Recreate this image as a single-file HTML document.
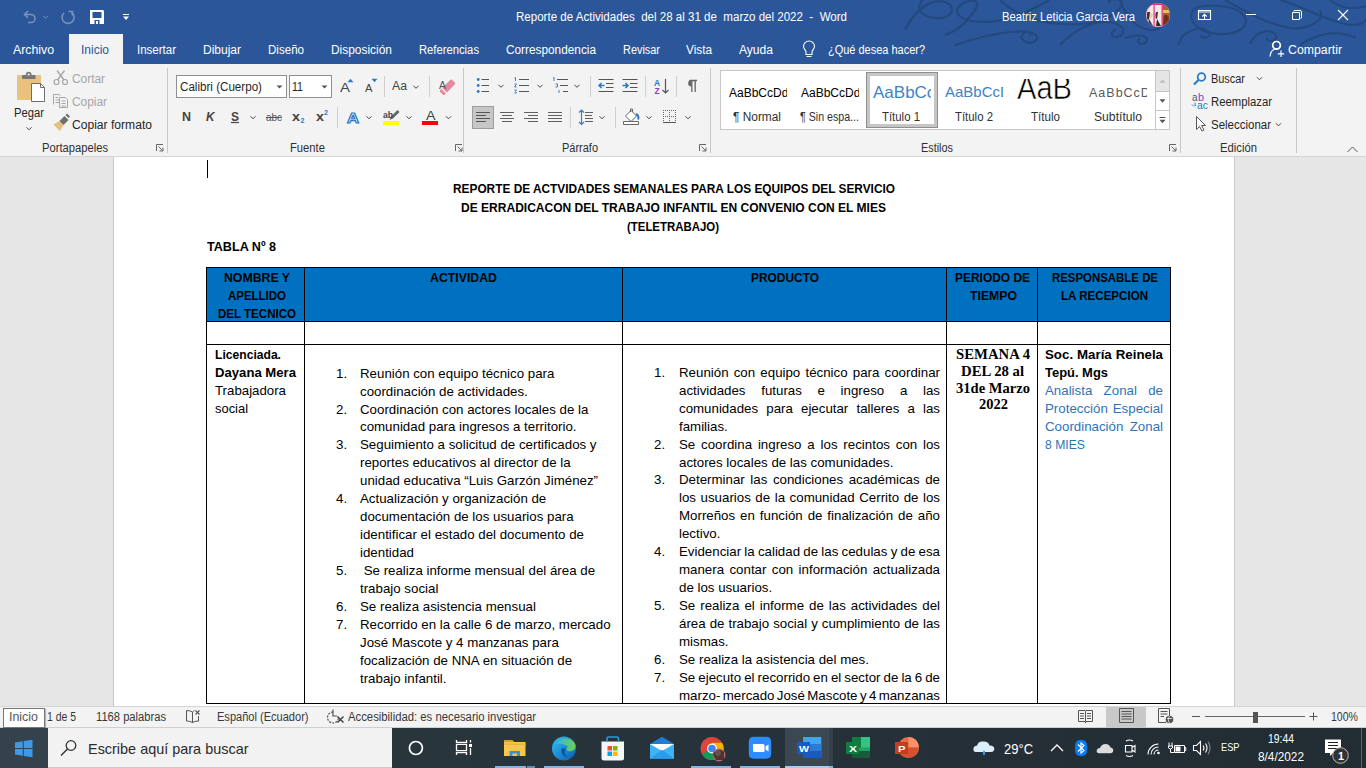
<!DOCTYPE html><html><head><meta charset="utf-8"><style>
*{margin:0;padding:0;box-sizing:border-box}
html,body{width:1366px;height:768px;overflow:hidden;background:#e6e6e6;position:relative;font-family:"Liberation Sans",sans-serif}
.a{position:absolute}
.t{position:absolute;white-space:pre;transform-origin:0 0}

</style></head><body>
<div class="a" style="left:0px;top:0px;width:1366px;height:64px;background:#2b579a;"></div>
<div class="a" style="left:0px;top:64px;width:1366px;height:93px;background:#f3f3f3;"></div>
<div class="a" style="left:0px;top:156px;width:1366px;height:1px;background:#d5d5d5;"></div>
<div class="a" style="left:0px;top:157px;width:1366px;height:549px;background:#e6e6e6;"></div>
<div class="a" style="left:114px;top:157px;width:1120px;height:549px;background:#ffffff;"></div>
<div class="a" style="left:113px;top:157px;width:1px;height:549px;background:#c8c8c8;"></div>
<div class="a" style="left:1234px;top:157px;width:1px;height:549px;background:#c8c8c8;"></div>
<div class="a" style="left:0px;top:727px;width:1366px;height:1px;background:#cfcfcf;"></div>
<div class="a" style="left:0px;top:707px;width:1366px;height:20px;background:#f3f3f3;"></div>
<div class="a" style="left:0px;top:706px;width:1366px;height:1px;background:#d5d5d5;"></div>
<div class="a" style="left:0px;top:728px;width:1366px;height:40px;background:linear-gradient(90deg,#2c3a40 0%,#28343b 40%,#242f37 70%,#212c33 100%);"></div>
<svg class="a" style="left:0;top:0" width="1366" height="64"><path d="M905 30 C915 10 930 -2 945 2 C958 6 952 20 935 18 C918 16 915 5 925 -2" stroke="#24497f" fill="none" stroke-width="2.2"/><path d="M945 35 C960 30 968 20 975 10 C982 0 972 -2 962 4 C950 12 960 22 985 22 C1010 22 1030 10 1050 0" stroke="#24497f" fill="none" stroke-width="2.2"/><path d="M955 45 C970 40 990 34 1010 32 C1030 30 1040 34 1036 40 C1032 45 1020 42 1022 36 C1024 30 1032 30 1030 36" stroke="#24497f" fill="none" stroke-width="2.2"/><path d="M1000 0 C1010 10 1030 22 1060 24 C1090 26 1110 20 1120 8 C1126 0 1116 -4 1108 2" stroke="#24497f" fill="none" stroke-width="2.2"/><path d="M1060 45 C1075 30 1090 22 1105 22 C1122 22 1128 32 1120 36 C1112 40 1108 32 1116 30" stroke="#24497f" fill="none" stroke-width="2.2"/><path d="M1120 0 C1125 15 1135 28 1150 30 C1160 31 1166 24 1160 20" stroke="#24497f" fill="none" stroke-width="2.2"/><path d="M1125 38 C1140 33 1150 36 1146 42 C1142 46 1134 42 1140 38" stroke="#24497f" fill="none" stroke-width="2.2"/><path d="M1178 45 C1182 32 1196 26 1206 30 C1214 34 1208 40 1200 36" stroke="#24497f" fill="none" stroke-width="2.2"/><path d="M1192 20 C1188 8 1200 4 1220 6 C1245 8 1252 22 1240 30 C1225 38 1198 34 1192 20Z" stroke="#24497f" fill="none" stroke-width="2.2"/><path d="M1225 0 C1240 8 1265 24 1290 28 C1310 30 1325 20 1320 10" stroke="#24497f" fill="none" stroke-width="2.2"/><path d="M1250 44 C1255 32 1268 28 1275 34 C1280 40 1270 44 1266 38" stroke="#24497f" fill="none" stroke-width="2.2"/><path d="M1280 0 C1300 5 1320 18 1345 24 C1360 27 1366 22 1366 18" stroke="#24497f" fill="none" stroke-width="2.2"/><path d="M1300 45 C1318 32 1340 30 1356 38" stroke="#24497f" fill="none" stroke-width="2.2"/><path d="M1330 0 C1340 8 1350 10 1366 6" stroke="#24497f" fill="none" stroke-width="2.2"/></svg>
<div class="a" style="left:69px;top:34px;width:54px;height:30px;background:#f3f3f3;"></div>
<div class="a" style="left:207px;top:160px;width:1px;height:18px;background:#000;"></div>
<div class="a" style="left:206px;top:267px;width:965px;height:55px;background:#0070c0;"></div>
<div class="a" style="left:206px;top:267px;width:965px;height:1px;background:#000;"></div>
<div class="a" style="left:206px;top:321px;width:965px;height:1px;background:#000;"></div>
<div class="a" style="left:206px;top:344px;width:965px;height:1px;background:#000;"></div>
<div class="a" style="left:206px;top:703px;width:965px;height:1px;background:#000;"></div>
<div class="a" style="left:206px;top:267px;width:1px;height:437px;background:#000;"></div>
<div class="a" style="left:304px;top:267px;width:1px;height:437px;background:#000;"></div>
<div class="a" style="left:622px;top:267px;width:1px;height:437px;background:#000;"></div>
<div class="a" style="left:946px;top:267px;width:1px;height:437px;background:#000;"></div>
<div class="a" style="left:1037px;top:267px;width:1px;height:437px;background:#000;"></div>
<div class="a" style="left:1170px;top:267px;width:1px;height:437px;background:#000;"></div>
<div class="a" style="left:176px;top:75px;width:111px;height:23px;background:#ffffff;border:1px solid #8f8f8f"></div>
<div class="a" style="left:289px;top:75px;width:43px;height:23px;background:#ffffff;border:1px solid #8f8f8f"></div>
<div class="a" style="left:720px;top:70px;width:450px;height:60px;background:#ffffff;border:1px solid #c6c6c6"></div>
<div class="a" style="left:866px;top:72px;width:72px;height:56px;background:#ffffff;border:1px solid #8f8f8f;box-shadow:inset 0 0 0 3px #c6c6c6"></div>
<div class="a" style="left:1155px;top:70px;width:15px;height:60px;background:#ffffff;border:1px solid #c6c6c6"></div>
<div class="a" style="left:1156px;top:71px;width:13px;height:21px;background:#e6e6e6;"></div>
<div class="a" style="left:1155px;top:91px;width:15px;height:1px;background:#c6c6c6;"></div>
<div class="a" style="left:1155px;top:110px;width:15px;height:1px;background:#c6c6c6;"></div>
<div class="a" style="left:472px;top:106px;width:22px;height:23px;background:#c6c6c6;border:1px solid #9c9c9c"></div>
<svg class="a" style="left:0;top:0" width="1366" height="768"><path d="M25 14.5 H31 A4 4 0 0 1 31 22.5 H28" stroke="#7591c0" fill="none" stroke-width="1.6" /><path d="M28 11 L24.5 14.5 L28 18" stroke="#7591c0" fill="none" stroke-width="1.6" /><path d="M43.0 15.8 L45.5 18.3 L48.0 15.8" stroke="#7591c0" fill="none" stroke-width="1" /><path d="M71.5 12.5 A6 6 0 1 1 64 13" stroke="#7591c0" fill="none" stroke-width="1.6" /><path d="M68.5 11.5 H72.5 V15.5" stroke="#7591c0" fill="none" stroke-width="1.6" /><path d="M90 10 H103 L104 11 V24 H90Z" stroke="none" fill="#fff" stroke-width="1" /><path d="M92.5 12 H101.5 V18 H92.5Z" stroke="none" fill="#2b579a" stroke-width="1" /><path d="M94.5 20 H99.5 V24 H94.5Z" stroke="none" fill="#2b579a" stroke-width="1" /><path d="M96 21 H98 V24 H96Z" stroke="none" fill="#fff" stroke-width="1" /><path d="M123 14.5 H129" stroke="#fff" fill="none" stroke-width="1" /><path d="M123 16.5 H129 L126 20Z" stroke="none" fill="#fff" stroke-width="1" /><path d="M806 54.5 V52 C806 50 803.5 49 803.5 46.5 A5.5 5.5 0 0 1 814.5 46.5 C814.5 49 812 50 812 52 V54.5 Z M806.5 56.5 H811.5" stroke="#fff" fill="none" stroke-width="1.1" /><path d="M1270 56.5 C1270.5 51 1273 49 1276.5 49 M1276.5 41.5 A4 4 0 1 0 1276.6 41.5" stroke="#fff" fill="none" stroke-width="1.2" /><circle cx="1276.5" cy="45" r="3.7" stroke="#fff" fill="none" stroke-width="1.2"/><path d="M1281 50.5 V57 M1277.8 53.8 H1284.2" stroke="#fff" fill="none" stroke-width="1.2" /><path d="M1198.5 10.5 H1210.5 V19.5 H1198.5Z M1198.5 12 H1210.5 M1204.5 19 V14.5 M1202.3 16.5 L1204.5 14.3 L1206.7 16.5" stroke="#fff" fill="none" stroke-width="1.1" /><path d="M1246 14.5 H1256" stroke="#fff" fill="none" stroke-width="1" /><path d="M1292.5 12.5 H1299.5 V19.5 H1292.5Z M1293.5 11.5 Q1293.5 10.5 1295 10.5 H1300 Q1301.5 10.5 1301.5 12 V17 Q1301.5 18.5 1300.5 18.5" stroke="#fff" fill="none" stroke-width="1" /><path d="M1338 10 L1348 20 M1348 10 L1338 20" stroke="#fff" fill="none" stroke-width="1.1" /><defs><clipPath id="avc"><circle cx="1158" cy="15" r="12"/></clipPath></defs><g clip-path="url(#avc)"><rect x="1146" y="3" width="24" height="24" fill="#f4ece2"/><rect x="1162.5" y="3" width="8" height="24" fill="#a5652a"/><rect x="1162.5" y="10" width="8" height="3" fill="#e7c060"/><rect x="1153.5" y="3" width="1.2" height="24" fill="#e8288a"/><rect x="1161.5" y="3" width="1.2" height="24" fill="#e8288a"/><rect x="1146" y="3" width="24" height="2" fill="#e8288a"/><path d="M1147 13 Q1148 11 1150 12 L1149 20 L1147 19Z" fill="#3a3030"/><path d="M1155.5 13 Q1157 11 1158 12 L1157 19 L1155.5 18Z" fill="#3a3030"/><path d="M1149 19 L1153 26 L1148 26Z" fill="#2a2a2a"/><path d="M1157 19 L1161 26 L1156 26Z" fill="#2a2a2a"/><path d="M1150 13 Q1152 12 1153 15 Q1152 19 1150 18Z" fill="#e8d0c0"/><path d="M1164 15 Q1167 14 1169 17 L1169 26 L1163 26Z" fill="#6a3515"/></g><circle cx="1158" cy="15" r="11.7" fill="none" stroke="#e0407a" stroke-width="0.7" opacity="0.6"/><path d="M18 75 H40 Q41 75 41 76 V99 Q41 100 40 100 H18 Q17 100 17 99 V76 Q17 75 18 75Z" stroke="none" fill="#eac27f" stroke-width="1" /><path d="M22 76 Q22 75 23 75 H34.5 Q35.5 75 35.5 76 V79 H22Z" stroke="none" fill="#787878" stroke-width="1" /><circle cx="28.7" cy="74.5" r="2.8" fill="#787878"/><circle cx="28.7" cy="74.5" r="1.1" fill="#f3f3f3"/><path d="M31.5 83.5 H40.5 L44.5 87.5 V101.5 H31.5Z" stroke="#6e6e6e" fill="#fff" stroke-width="1" /><path d="M40.5 83.5 V87.5 H44.5" stroke="#6e6e6e" fill="none" stroke-width="1" /><path d="M26.5 127.3 L29 129.8 L31.5 127.3" stroke="#444" fill="none" stroke-width="1" /><circle cx="56.5" cy="82" r="2.5" stroke="#a6a6a6" fill="none" stroke-width="1.2"/><circle cx="65" cy="82" r="2.5" stroke="#a6a6a6" fill="none" stroke-width="1.2"/><path d="M57.5 80 L64.5 70.5 M64 80 L57 70.5" stroke="#a6a6a6" fill="none" stroke-width="1.3" /><path d="M53.5 104.5 V94.5 H59 L60.5 96 M55.5 97.5 H58 M55.5 100 H59 M55.5 102.5 H59" stroke="#a6a6a6" fill="none" stroke-width="1" /><path d="M59.5 97.5 H65.5 L67.5 99.5 V107.5 H59.5Z M61.5 101 H65.5 M61.5 103.5 H65.5 M61.5 106 H65.5" stroke="#a6a6a6" fill="#f3f3f3" stroke-width="1" /><path d="M53.5 124.5 L59.5 121 L63.5 125 L60 131Z" stroke="none" fill="#e8be7a" stroke-width="1" /><path d="M59.5 121 L64.5 116 L68.5 120 L63.5 125Z" stroke="none" fill="#6e6e6e" stroke-width="1" /><path d="M65.5 115 L67 113.5 L70 116.5 L68.5 118Z" stroke="none" fill="#6e6e6e" stroke-width="1" /><path d="M156.5 151 V144.5 H163 M158.5 146.5 L163 151 M163 147.5 V151 H159.5" stroke="#666" fill="none" stroke-width="1" /><rect x="167" y="68" width="1" height="85" fill="#c8c8c8"/><path d="M276.5 85.5 L282.5 85.5 L279.5 88.5Z" stroke="none" fill="#555" stroke-width="1" /><path d="M321.5 85.5 L327.5 85.5 L324.5 88.5Z" stroke="none" fill="#555" stroke-width="1" /><path d="M347.5 82.25 L353.5 82.25 L350.5 78.75Z" stroke="none" fill="#2b79c2" stroke-width="1" /><path d="M371.5 78.75 L377.5 78.75 L374.5 82.25Z" stroke="none" fill="#2b79c2" stroke-width="1" /><rect x="384" y="76" width="1" height="21" fill="#d0d0d0"/><path d="M413.5 85.8 L416 88.3 L418.5 85.8" stroke="#444" fill="none" stroke-width="1" /><rect x="429" y="76" width="1" height="21" fill="#d0d0d0"/><path d="M455.5 151 V144.5 H462 M457.5 146.5 L462 151 M462 147.5 V151 H458.5" stroke="#666" fill="none" stroke-width="1" /><rect x="463" y="68" width="1" height="85" fill="#c8c8c8"/><path d="M250.5 116.3 L253 118.8 L255.5 116.3" stroke="#444" fill="none" stroke-width="1" /><path d="M231 122.5 H239" stroke="#444" fill="none" stroke-width="1.2" /><rect x="337" y="107" width="1" height="21" fill="#d0d0d0"/><path d="M366.5 116.3 L369 118.8 L371.5 116.3" stroke="#444" fill="none" stroke-width="1" /><path d="M406.5 116.3 L409 118.8 L411.5 116.3" stroke="#444" fill="none" stroke-width="1" /><path d="M446.0 116.3 L448.5 118.8 L451.0 116.3" stroke="#444" fill="none" stroke-width="1" /><rect x="383" y="121" width="16" height="4" fill="#ffff00"/><rect x="422" y="121" width="16" height="4" fill="#ff0000"/><path d="M389.5 120 L391 116.5 L397.5 110 L399.5 112 L393 118.5Z" stroke="none" fill="#666" stroke-width="1" /><rect x="439" y="84" width="17" height="6.5" rx="1.5" fill="#e58a9c" transform="rotate(-45 447.5 87.25)"/><path d="M441.5 88 L446.5 93" stroke="#f3f3f3" fill="none" stroke-width="1.2" /><circle cx="478.2" cy="79.5" r="1.4" fill="#2b79c2"/><path d="M481.5 79.5 H489" stroke="#555" fill="none" stroke-width="1" /><circle cx="478.2" cy="85.5" r="1.4" fill="#2b79c2"/><path d="M481.5 85.5 H489" stroke="#555" fill="none" stroke-width="1" /><circle cx="478.2" cy="91.5" r="1.4" fill="#2b79c2"/><path d="M481.5 91.5 H489" stroke="#555" fill="none" stroke-width="1" /><path d="M498.5 84.8 L501 87.3 L503.5 84.8" stroke="#444" fill="none" stroke-width="1" /><path d="M519 79.5 H529" stroke="#555" fill="none" stroke-width="1" /><path d="M519 85.5 H529" stroke="#555" fill="none" stroke-width="1" /><path d="M519 91.5 H529" stroke="#555" fill="none" stroke-width="1" /><path d="M514.5 78 L515.5 77.5 V81 M514.5 84 H516.5 L514.5 87 H516.5 M514.5 90 H516.5 L515.5 91.5 L516.5 93 H514.5" stroke="#2b79c2" fill="none" stroke-width="0.9" /><path d="M537.5 84.8 L540 87.3 L542.5 84.8" stroke="#444" fill="none" stroke-width="1" /><path d="M557 79.5 H568 M560 85.5 H568 M563 91.5 H568" stroke="#555" fill="none" stroke-width="1" /><path d="M553 78 L554 77.5 V81 M555.5 84 H557.5 V87 H555.5 M559 90 V93" stroke="#2b79c2" fill="none" stroke-width="0.9" /><path d="M574.5 84.8 L577 87.3 L579.5 84.8" stroke="#444" fill="none" stroke-width="1" /><rect x="590" y="76" width="1" height="21" fill="#d0d0d0"/><path d="M598.5 79.5 H613.5 M606 83.5 H613.5 M606 87.5 H613.5 M598.5 91.5 H613.5" stroke="#555" fill="none" stroke-width="1" /><path d="M604.5 85.5 H599 M601.5 83 L599 85.5 L601.5 88" stroke="#2b79c2" fill="none" stroke-width="1.5" /><path d="M622.5 79.5 H637.5 M630 83.5 H637.5 M630 87.5 H637.5 M622.5 91.5 H637.5" stroke="#555" fill="none" stroke-width="1" /><path d="M622.5 85.5 H628 M625.5 83 L628 85.5 L625.5 88" stroke="#2b79c2" fill="none" stroke-width="1.5" /><rect x="645" y="76" width="1" height="21" fill="#d0d0d0"/><path d="M665.5 79 V93 M662.5 90 L665.5 93 L668.5 90" stroke="#555" fill="none" stroke-width="1.2" /><rect x="676" y="76" width="1" height="21" fill="#d0d0d0"/><path d="M689.5 80.5 H697 M691.8 80.5 V92 M695.2 80.5 V92" stroke="#666" fill="none" stroke-width="1.3" /><path d="M691.5 80 A3.3 3.3 0 0 0 691.5 86.6Z" stroke="none" fill="#666" stroke-width="1" /><path d="M476 112.5 H490 M476 115.5 H486 M476 118.5 H490 M476 121.5 H486" stroke="#555" fill="none" stroke-width="1" /><path d="M500 112.5 H514 M502 115.5 H512 M500 118.5 H514 M502 121.5 H512" stroke="#606060" fill="none" stroke-width="1" /><path d="M524 112.5 H538 M528 115.5 H538 M524 118.5 H538 M528 121.5 H538" stroke="#606060" fill="none" stroke-width="1" /><path d="M548 112.5 H562 M548 115.5 H562 M548 118.5 H562 M548 121.5 H562" stroke="#606060" fill="none" stroke-width="1" /><rect x="570" y="107" width="1" height="21" fill="#d0d0d0"/><path d="M585 112.5 H593 M585 115.5 H592 M585 118.5 H593 M585 121.5 H593" stroke="#606060" fill="none" stroke-width="1" /><path d="M581.5 110 V124.5 M579 112.5 L581.5 110 L584 112.5 M579 122 L581.5 124.5 L584 122" stroke="#3a7fc4" fill="none" stroke-width="1.2" /><path d="M599.5 116.3 L602 118.8 L604.5 116.3" stroke="#444" fill="none" stroke-width="1" /><rect x="615" y="107" width="1" height="21" fill="#d0d0d0"/><path d="M623.5 121.5 H638.5 V124.5 H623.5Z" stroke="#666" fill="#fff" stroke-width="1" /><path d="M625.5 116 L631 110.5 L636.5 116 L631 121.5Z" stroke="#666" fill="#fff" stroke-width="1" /><path d="M630.5 112 V109 H632.5 V112" stroke="#666" fill="none" stroke-width="1" /><path d="M636 114 C638.5 115 639 118 638 119.5" stroke="#2b79c2" fill="none" stroke-width="2" /><path d="M646.5 116.3 L649 118.8 L651.5 116.3" stroke="#444" fill="none" stroke-width="1" /><rect x="663" y="110.0" width="1" height="1" fill="#666"/><rect x="665" y="110.0" width="1" height="1" fill="#666"/><rect x="667" y="110.0" width="1" height="1" fill="#666"/><rect x="669" y="110.0" width="1" height="1" fill="#666"/><rect x="671" y="110.0" width="1" height="1" fill="#666"/><rect x="673" y="110.0" width="1" height="1" fill="#666"/><rect x="675" y="110.0" width="1" height="1" fill="#666"/><rect x="663" y="116.0" width="1" height="1" fill="#666"/><rect x="665" y="116.0" width="1" height="1" fill="#666"/><rect x="667" y="116.0" width="1" height="1" fill="#666"/><rect x="669" y="116.0" width="1" height="1" fill="#666"/><rect x="671" y="116.0" width="1" height="1" fill="#666"/><rect x="673" y="116.0" width="1" height="1" fill="#666"/><rect x="675" y="116.0" width="1" height="1" fill="#666"/><rect x="663" y="110" width="1" height="1" fill="#666"/><rect x="663" y="112" width="1" height="1" fill="#666"/><rect x="663" y="114" width="1" height="1" fill="#666"/><rect x="663" y="116" width="1" height="1" fill="#666"/><rect x="663" y="118" width="1" height="1" fill="#666"/><rect x="663" y="120" width="1" height="1" fill="#666"/><rect x="669" y="110" width="1" height="1" fill="#666"/><rect x="669" y="112" width="1" height="1" fill="#666"/><rect x="669" y="114" width="1" height="1" fill="#666"/><rect x="669" y="116" width="1" height="1" fill="#666"/><rect x="669" y="118" width="1" height="1" fill="#666"/><rect x="669" y="120" width="1" height="1" fill="#666"/><rect x="675" y="110" width="1" height="1" fill="#666"/><rect x="675" y="112" width="1" height="1" fill="#666"/><rect x="675" y="114" width="1" height="1" fill="#666"/><rect x="675" y="116" width="1" height="1" fill="#666"/><rect x="675" y="118" width="1" height="1" fill="#666"/><rect x="675" y="120" width="1" height="1" fill="#666"/><path d="M663 122.5 H676" stroke="#555" fill="none" stroke-width="1" /><path d="M685.5 116.3 L688 118.8 L690.5 116.3" stroke="#444" fill="none" stroke-width="1" /><path d="M699.5 151 V144.5 H706 M701.5 146.5 L706 151 M706 147.5 V151 H702.5" stroke="#666" fill="none" stroke-width="1" /><rect x="710" y="68" width="1" height="85" fill="#c8c8c8"/><path d="M1159.5 82.75 L1165.5 82.75 L1162.5 79.25Z" stroke="none" fill="#bdbdbd" stroke-width="1" /><path d="M1159.5 99.25 L1165.5 99.25 L1162.5 102.75Z" stroke="none" fill="#555" stroke-width="1" /><path d="M1159.5 117.5 H1165.5" stroke="#555" fill="none" stroke-width="1" /><path d="M1159.5 119.75 L1165.5 119.75 L1162.5 123.25Z" stroke="none" fill="#555" stroke-width="1" /><path d="M1169.5 151 V144.5 H1176 M1171.5 146.5 L1176 151 M1176 147.5 V151 H1172.5" stroke="#666" fill="none" stroke-width="1" /><rect x="1180" y="68" width="1" height="85" fill="#c8c8c8"/><circle cx="1201.5" cy="77" r="3.8" stroke="#2b79c2" fill="none" stroke-width="1.8"/><path d="M1198.5 80 L1194 84.5" stroke="#2b79c2" fill="none" stroke-width="2.2" /><path d="M1257.0 77.3 L1259.5 79.8 L1262.0 77.3" stroke="#444" fill="none" stroke-width="1" /><path d="M1195 102.5 V105.5 H1196 M1192 104.5 L1194 106.5" stroke="#2b79c2" fill="none" stroke-width="0.9" /><path d="M1196.5 116.5 V129.5 L1199.5 126.5 L1202 131 L1204 130 L1201.5 125.5 L1205.5 125.5Z" stroke="#555" fill="#fff" stroke-width="1" /><path d="M1276.0 123.3 L1278.5 125.8 L1281.0 123.3" stroke="#444" fill="none" stroke-width="1" /><rect x="1296" y="68" width="1" height="85" fill="#c8c8c8"/><path d="M1347.5 152 L1352.5 147 L1357.5 152" stroke="#555" fill="none" stroke-width="1" /></svg>
<div class="a" style="left:3px;top:708px;width:42px;height:20px;background:#fff;border:1px solid #767676;box-shadow:1px 1px 1px rgba(0,0,0,0.25)"></div>
<div class="a" style="left:1106px;top:707px;width:40px;height:21px;background:#c8c8c8;"></div>
<svg class="a" style="left:0;top:0" width="1366" height="768"><path d="M192.5 712 Q190 710.5 186.5 710.5 V721 Q190 721 192.5 722.5 Q195 721 198.5 721 V716 M192.5 712 V722.5 M192.5 712 Q193.5 711 194.5 710.7" stroke="#555" fill="none" stroke-width="1" /><path d="M195.5 710.5 L199.5 714.5 M199.5 710.5 L195.5 714.5" stroke="#555" fill="none" stroke-width="1.1" /><path d="M333 712 A5.5 5.5 0 1 0 338.5 718" stroke="#555" fill="none" stroke-width="1.2" stroke-dasharray="2 1.2"/><path d="M333 709.5 V716 H337" stroke="#555" fill="none" stroke-width="1.2" /><path d="M337.5 716.5 L343.5 722.5 M343.5 716.5 L337.5 722.5" stroke="#444" fill="none" stroke-width="1.5" /><path d="M1078.5 710.5 H1085 L1085.5 711.5 L1086 710.5 H1092.5 V721.5 H1086 L1085.5 723 L1085 721.5 H1078.5Z M1085.5 711.5 V721.5 M1080 713.5 H1084 M1080 716 H1084 M1080 718.5 H1084 M1087 713.5 H1091 M1087 716 H1091 M1087 718.5 H1091" stroke="#555" fill="none" stroke-width="1" /><path d="M1119.5 708.5 H1133.5 V722.5 H1119.5Z M1121.5 711.5 H1131.5 M1121.5 714 H1131.5 M1121.5 716.5 H1131.5 M1121.5 719 H1131.5" stroke="#555" fill="none" stroke-width="1" /><path d="M1158.5 708.5 H1169.5 V716 M1158.5 708.5 V722.5 H1166 M1160.5 711.5 H1167.5 M1160.5 714 H1167.5 M1160.5 716.5 H1164" stroke="#555" fill="none" stroke-width="1" /><circle cx="1169.5" cy="719.5" r="3.8" fill="#555"/><path d="M1167 718.5 H1172 M1169.5 716 C1168 718 1168 721 1169.5 723" stroke="#f3f3f3" fill="none" stroke-width="0.8" /><path d="M1192 716.5 H1200" stroke="#555" fill="none" stroke-width="1" /><path d="M1205 716.5 H1305" stroke="#666" fill="none" stroke-width="1" /><rect x="1253" y="712" width="5" height="11" fill="#555"/><path d="M1309.5 716.5 H1317.5 M1313.5 712.5 V720.5" stroke="#555" fill="none" stroke-width="1" /></svg>
<div class="a" style="left:0px;top:728px;width:48px;height:40px;background:#34434b;"></div>
<div class="a" style="left:48px;top:728px;width:344px;height:40px;background:#f2f2f2;border-bottom:1px solid #c8c8c8"></div>
<div class="a" style="left:785px;top:728px;width:44px;height:40px;background:#3c4851;"></div>
<div class="a" style="left:829px;top:728px;width:4px;height:40px;background:#33404a;"></div>
<div class="a" style="left:1361px;top:728px;width:1px;height:40px;background:#5a6670;"></div>
<div class="a" style="left:495px;top:766px;width:31px;height:2px;background:#7db6ea;"></div>
<div class="a" style="left:527px;top:766px;width:8px;height:2px;background:#5f8fba;"></div>
<div class="a" style="left:544px;top:766px;width:40px;height:2px;background:#7db6ea;"></div>
<div class="a" style="left:691px;top:766px;width:40px;height:2px;background:#7db6ea;"></div>
<div class="a" style="left:740px;top:766px;width:40px;height:2px;background:#7db6ea;"></div>
<div class="a" style="left:785px;top:766px;width:44px;height:2px;background:#a3cdf2;"></div>
<div class="a" style="left:829px;top:766px;width:4px;height:2px;background:#7db6ea;"></div>
<svg class="a" style="left:0;top:0" width="1366" height="768"><path d="M15 742.5 L22.8 741.3 V748 H15Z M23.8 741.1 L32.5 739.8 V748 H23.8Z M15 749 H22.8 V755.7 L15 754.5Z M23.8 749 H32.5 V757.2 L23.8 755.9Z" stroke="none" fill="#3c9ae8" stroke-width="1" /><circle cx="71" cy="745.5" r="4.8" stroke="#333" fill="none" stroke-width="1.3"/><path d="M67.5 749 L61 755.5" stroke="#333" fill="none" stroke-width="1.4" /><circle cx="415.9" cy="748" r="6.5" stroke="#fff" fill="none" stroke-width="1.7"/><path d="M456.5 740 V742.3 H466.5 V740 M456.5 744.3 H466.5 V750.7 H456.5Z M456.5 755 V752.7 H466.5 V755 M470.5 740 V742.5 M470.5 748 V755" stroke="#fff" fill="none" stroke-width="1.3" /><rect x="469" y="744" width="3" height="3" fill="#fff"/><path d="M504 740 H512 L514 742 H525.5 V756 H504Z" stroke="none" fill="#f5c84c" stroke-width="1" /><path d="M504 740 H512 L514 742 H504Z" stroke="none" fill="#d89e22" stroke-width="1" /><path d="M504 743.5 H525.5 V745 H504Z" stroke="none" fill="#e8b43a" stroke-width="1" /><path d="M509.5 756 V751 H520 V756 H517 V753.5 H512.5 V756Z" stroke="none" fill="#3a8ee0" stroke-width="1" /><defs><linearGradient id="eg" x1="0" y1="0" x2="1" y2="1"><stop offset="0" stop-color="#35c1f1"/><stop offset="0.5" stop-color="#1a8fd6"/><stop offset="1" stop-color="#0c59a4"/></linearGradient><linearGradient id="eg2" x1="0" y1="0" x2="1" y2="0"><stop offset="0" stop-color="#2fb4e9"/><stop offset="1" stop-color="#6fd34a"/></linearGradient></defs><circle cx="564" cy="748.5" r="12" fill="url(#eg)"/><path d="M556 745 C558 737 572 736 575.5 745 C576 750 572 752 568 751 C566 750.5 566 748 568 747 C566 744 559 743 556 745Z" stroke="none" fill="url(#eg2)" stroke-width="1" /><path d="M562 748 C560 752 563 757 569 757.5 C565 756 563 752 566 749Z" stroke="none" fill="#0b4f9c" stroke-width="1" /><path d="M601.5 741.5 H624 V758 Q624 760.5 621.5 760.5 H604 Q601.5 760.5 601.5 758Z" stroke="none" fill="#f6f6f6" stroke-width="1" /><path d="M607 741.5 V738.5 Q607 737 608.5 737 H617 Q618.5 737 618.5 738.5 V741.5" stroke="#2a9bd8" fill="none" stroke-width="1.6" /><rect x="607.5" y="746" width="4.5" height="4.5" fill="#f25022"/><rect x="613" y="746" width="4.5" height="4.5" fill="#7fba00"/><rect x="607.5" y="751.5" width="4.5" height="4.5" fill="#00a4ef"/><rect x="613" y="751.5" width="4.5" height="4.5" fill="#ffb900"/><path d="M650 744 L662 736.8 L674 744 V758.7 H650Z" stroke="none" fill="#1e7ed6" stroke-width="1" /><path d="M650 744 H674 V758.7 H650Z" stroke="none" fill="#3fb4f2" stroke-width="1" /><path d="M650 744 L662 751 L674 744Z" stroke="none" fill="#ffffff" stroke-width="1" /><path d="M650 758.7 L662 749.5 L674 758.7Z" stroke="none" fill="#1b8ee3" stroke-width="1" opacity="0.6"/><circle cx="712" cy="748.5" r="11.5" fill="#db4437"/><path d="M712 748.5 L702 754.3 A11.5 11.5 0 0 0 722 754.3Z" stroke="none" fill="#0f9d58" stroke-width="1" /><path d="M712 748.5 L722 754.3 A11.5 11.5 0 0 0 722 742.7 L712 742.7Z" stroke="none" fill="#f4b400" stroke-width="1" /><circle cx="712" cy="748.5" r="5" fill="#fff"/><circle cx="712" cy="748.5" r="3.8" fill="#4285f4"/><circle cx="719" cy="755" r="6.5" fill="#b06a6a"/><circle cx="718" cy="753" r="3" fill="#f0d0c0"/><path d="M713 755 C714 750 720 748 724 752 V760 L716 760Z" fill="#2a1a1a" opacity="0.7"/><path d="M754 736.8 H766 Q771.2 736.8 771.2 742 V753.5 Q771.2 758.7 766 758.7 H754 Q748.8 758.7 748.8 753.5 V742 Q748.8 736.8 754 736.8Z" stroke="none" fill="#2d8cff" stroke-width="1" /><path d="M753 744 H763 Q764.5 744 764.5 745.5 V752 H754.5 Q753 752 753 750.5Z" stroke="none" fill="#fff" stroke-width="1" /><path d="M765.5 746.5 L768.5 744.5 V751.5 L765.5 749.5Z" stroke="none" fill="#fff" stroke-width="1" /><path d="M803 737 H821.3 V758 H803Z" stroke="none" fill="#41a5ee" stroke-width="1" /><path d="M803 744 H821.3 V751 H803Z" stroke="none" fill="#2b7cd3" stroke-width="1" /><path d="M803 751 H821.3 V758 H803Z" stroke="none" fill="#185abd" stroke-width="1" /><path d="M797 742 H810 V754 H797Z" stroke="none" fill="#185abd" stroke-width="1" /><path d="M852 737 H870 V758 H852Z" stroke="none" fill="#21a366" stroke-width="1" /><path d="M852 737 H861 V747.5 H852Z" stroke="none" fill="#107c41" stroke-width="1" /><path d="M861 737 H870 V747.5 H861Z" stroke="none" fill="#33c481" stroke-width="1" /><path d="M852 751 H870 V758 H852Z" stroke="none" fill="#185c37" stroke-width="1" /><path d="M846 742 H859 V754 H846Z" stroke="none" fill="#107c41" stroke-width="1" /><circle cx="908.5" cy="747.5" r="10.5" fill="#ed6c47"/><path d="M908.5 747.5 V737 A10.5 10.5 0 0 1 919 747.5Z" stroke="none" fill="#ff8f6b" stroke-width="1" /><path d="M898 747.5 H919 A10.5 10.5 0 0 1 898 747.5Z" stroke="none" fill="#d35230" stroke-width="1" /><path d="M895 742 H908 V754 H895Z" stroke="none" fill="#c43e1c" stroke-width="1" /><path d="M976 752 Q973 752 973.5 748.5 Q974 745.5 977 745.8 Q978 741 983.5 741.5 Q988.5 741.5 989.5 745.5 Q994.5 745.5 994.3 749 Q994 752 991 752Z" stroke="none" fill="#dbeefc" stroke-width="1" /><path d="M984 750 Q981.5 753.5 984 755.6 Q986.5 753.5 984 750Z" stroke="none" fill="#3d9be9" stroke-width="1" /><path d="M1051 751 L1057 745 L1063 751" stroke="#fff" fill="none" stroke-width="1.4" /><path d="M1081 739.8 Q1087.1 739.8 1087.1 746 V750 Q1087.1 756.2 1081 756.2 Q1075.1 756.2 1075.1 750 V746 Q1075.1 739.8 1081 739.8Z" stroke="none" fill="#0a7cf0" stroke-width="1" /><path d="M1078 744.5 L1084 750.5 L1081 753 V743 L1084 745.5 L1078 751.5" stroke="#fff" fill="none" stroke-width="1.1" /><path d="M1099 753.3 Q1096.5 753.3 1096.7 750.5 Q1097 748 1100 748 Q1101.5 744 1105.5 744 Q1109.5 744 1110.5 747.5 Q1113.3 747.8 1113.2 750.5 Q1113 753.3 1110.5 753.3Z" stroke="none" fill="#dcdcdc" stroke-width="1" /><path d="M1125.5 745.5 H1132 V752 H1125.5Z M1132 747.5 L1135 745.5 V752 L1132 750 M1126 741 Q1129.5 739 1133 741 M1126 755.5 Q1129.5 757.5 1133 755.5" stroke="#fff" fill="none" stroke-width="1.1" /><circle cx="1158.5" cy="753" r="1.3" fill="#fff"/><path d="M1148 754.5 A10.5 10.5 0 0 1 1158.5 744 M1151 754.5 A7.5 7.5 0 0 1 1158.5 747 M1154 754.5 A4.5 4.5 0 0 1 1158.5 750" stroke="#fff" fill="none" stroke-width="1.1" /><path d="M1174.5 745.5 H1184.5 V752.5 H1174.5Z M1184.5 747.5 H1185.8 V750.5 H1184.5" stroke="#fff" fill="none" stroke-width="1" /><path d="M1175.5 746.5 H1180.5 V751.5 H1175.5Z" stroke="none" fill="#fff" stroke-width="1" /><path d="M1169 746 V742.5 M1172 746 V742.5 M1168.5 746 H1172.5 V748 Q1170.5 750 1168.5 748Z M1170.5 749 V752.5 H1174.5" stroke="#fff" fill="none" stroke-width="1" /><path d="M1193.5 745.5 H1196.5 L1200.5 741.5 V754.5 L1196.5 750.5 H1193.5Z" stroke="#fff" fill="none" stroke-width="1.1" /><path d="M1203 745.5 Q1205 748 1203 750.5 M1205.5 743.5 Q1208.5 748 1205.5 752.5" stroke="#fff" fill="none" stroke-width="1.1" /><path d="M1208 741.5 Q1212 748 1208 754.5" stroke="#888" fill="none" stroke-width="1.1" /><path d="M1325 739.5 H1341 V753 H1333 L1330 756 V753 H1325Z" stroke="none" fill="#fff" stroke-width="1" /><path d="M1328 742.5 H1338 M1328 745.5 H1338 M1328 748.5 H1338" stroke="#222" fill="none" stroke-width="1.1" /><circle cx="1340.5" cy="755.5" r="7.8" fill="#333" stroke="#bbb" stroke-width="1"/></svg>
<div class="t" style="left:516px;top:11px;font-size:12px;line-height:12px;color:#ffffff;font-family:'Liberation Sans', sans-serif;transform:scaleX(0.9623);">Reporte de Actividades  del 28 al 31 de  marzo del 2022  -  Word</div>
<div class="t" style="left:1002px;top:11px;font-size:12px;line-height:12px;color:#ffffff;font-family:'Liberation Sans', sans-serif;transform:scaleX(0.9361);">Beatriz Leticia Garcia Vera</div>
<div class="t" style="left:13px;top:44px;font-size:12px;line-height:12px;color:#ffffff;font-family:'Liberation Sans', sans-serif;transform:scaleX(1.0246);">Archivo</div>
<div class="t" style="left:81px;top:44px;font-size:12px;line-height:12px;color:#2b579a;font-family:'Liberation Sans', sans-serif;">Inicio</div>
<div class="t" style="left:137px;top:44px;font-size:12px;line-height:12px;color:#ffffff;font-family:'Liberation Sans', sans-serif;transform:scaleX(0.9585);">Insertar</div>
<div class="t" style="left:203px;top:44px;font-size:12px;line-height:12px;color:#ffffff;font-family:'Liberation Sans', sans-serif;">Dibujar</div>
<div class="t" style="left:268px;top:44px;font-size:12px;line-height:12px;color:#ffffff;font-family:'Liberation Sans', sans-serif;transform:scaleX(0.9636);">Diseño</div>
<div class="t" style="left:331px;top:44px;font-size:12px;line-height:12px;color:#ffffff;font-family:'Liberation Sans', sans-serif;transform:scaleX(0.9941);">Disposición</div>
<div class="t" style="left:419px;top:44px;font-size:12px;line-height:12px;color:#ffffff;font-family:'Liberation Sans', sans-serif;transform:scaleX(0.9370);">Referencias</div>
<div class="t" style="left:506px;top:44px;font-size:12px;line-height:12px;color:#ffffff;font-family:'Liberation Sans', sans-serif;transform:scaleX(0.9848);">Correspondencia</div>
<div class="t" style="left:623px;top:44px;font-size:12px;line-height:12px;color:#ffffff;font-family:'Liberation Sans', sans-serif;transform:scaleX(0.9094);">Revisar</div>
<div class="t" style="left:686px;top:44px;font-size:12px;line-height:12px;color:#ffffff;font-family:'Liberation Sans', sans-serif;transform:scaleX(0.9823);">Vista</div>
<div class="t" style="left:739px;top:44px;font-size:12px;line-height:12px;color:#ffffff;font-family:'Liberation Sans', sans-serif;transform:scaleX(1.0055);">Ayuda</div>
<div class="t" style="left:828px;top:44px;font-size:12px;line-height:12px;color:#ffffff;font-family:'Liberation Sans', sans-serif;transform:scaleX(0.9144);">¿Qué desea hacer?</div>
<div class="t" style="left:1288px;top:44px;font-size:12px;line-height:12px;color:#ffffff;font-family:'Liberation Sans', sans-serif;transform:scaleX(1.0249);">Compartir</div>
<div class="t" style="left:453px;top:182px;font-size:13.3px;line-height:13.3px;color:#000;font-family:'Liberation Sans', sans-serif;font-weight:700;transform:scaleX(0.8920);">REPORTE DE ACTVIDADES SEMANALES PARA LOS EQUIPOS DEL SERVICIO</div>
<div class="t" style="left:461px;top:201px;font-size:13.3px;line-height:13.3px;color:#000;font-family:'Liberation Sans', sans-serif;font-weight:700;transform:scaleX(0.9045);">DE ERRADICACON DEL TRABAJO INFANTIL EN CONVENIO CON EL MIES</div>
<div class="t" style="left:627px;top:220px;font-size:13.3px;line-height:13.3px;color:#000;font-family:'Liberation Sans', sans-serif;font-weight:700;transform:scaleX(0.8589);">(TELETRABAJO)</div>
<div class="t" style="left:207px;top:240px;font-size:13.3px;line-height:13.3px;color:#000;font-family:'Liberation Sans', sans-serif;font-weight:700;transform:scaleX(0.9474);">TABLA Nº 8</div>
<div class="t" style="left:224px;top:272px;font-size:12.6px;line-height:12.6px;color:#000;font-family:'Liberation Sans', sans-serif;font-weight:700;transform:scaleX(0.9755);">NOMBRE Y</div>
<div class="t" style="left:228px;top:290px;font-size:12.6px;line-height:12.6px;color:#000;font-family:'Liberation Sans', sans-serif;font-weight:700;transform:scaleX(0.9109);">APELLIDO</div>
<div class="t" style="left:218px;top:308px;font-size:12.6px;line-height:12.6px;color:#000;font-family:'Liberation Sans', sans-serif;font-weight:700;transform:scaleX(0.9161);">DEL TECNICO</div>
<div class="t" style="left:430px;top:272px;font-size:12.6px;line-height:12.6px;color:#000;font-family:'Liberation Sans', sans-serif;font-weight:700;transform:scaleX(0.9770);">ACTIVIDAD</div>
<div class="t" style="left:751px;top:272px;font-size:12.6px;line-height:12.6px;color:#000;font-family:'Liberation Sans', sans-serif;font-weight:700;transform:scaleX(0.9465);">PRODUCTO</div>
<div class="t" style="left:955px;top:272px;font-size:12.6px;line-height:12.6px;color:#000;font-family:'Liberation Sans', sans-serif;font-weight:700;transform:scaleX(0.9484);">PERIODO DE</div>
<div class="t" style="left:970px;top:290px;font-size:12.6px;line-height:12.6px;color:#000;font-family:'Liberation Sans', sans-serif;font-weight:700;transform:scaleX(0.9735);">TIEMPO</div>
<div class="t" style="left:1052px;top:272px;font-size:12.6px;line-height:12.6px;color:#000;font-family:'Liberation Sans', sans-serif;font-weight:700;transform:scaleX(0.9070);">RESPONSABLE DE</div>
<div class="t" style="left:1061px;top:290px;font-size:12.6px;line-height:12.6px;color:#000;font-family:'Liberation Sans', sans-serif;font-weight:700;transform:scaleX(0.9187);">LA RECEPCION</div>
<div class="t" style="left:215px;top:348px;font-size:13.3px;line-height:13.3px;color:#000;font-family:'Liberation Sans', sans-serif;font-weight:700;transform:scaleX(0.9111);">Licenciada.</div>
<div class="t" style="left:215px;top:366px;font-size:13.3px;line-height:13.3px;color:#000;font-family:'Liberation Sans', sans-serif;font-weight:700;transform:scaleX(0.9872);">Dayana Mera</div>
<div class="t" style="left:215px;top:384px;font-size:13.3px;line-height:13.3px;color:#000;font-family:'Liberation Sans', sans-serif;transform:scaleX(0.9969);">Trabajadora</div>
<div class="t" style="left:215px;top:402px;font-size:13.3px;line-height:13.3px;color:#000;font-family:'Liberation Sans', sans-serif;transform:scaleX(0.9706);">social</div>
<div class="t" style="left:336px;top:367px;font-size:13.3px;line-height:13.3px;color:#000;font-family:'Liberation Sans', sans-serif;">1.</div>
<div class="t" style="left:360px;top:367px;font-size:13.3px;line-height:13.3px;color:#000;font-family:'Liberation Sans', sans-serif;">Reunión con equipo técnico para</div>
<div class="t" style="left:360px;top:385px;font-size:13.3px;line-height:13.3px;color:#000;font-family:'Liberation Sans', sans-serif;">coordinación de actividades.</div>
<div class="t" style="left:336px;top:403px;font-size:13.3px;line-height:13.3px;color:#000;font-family:'Liberation Sans', sans-serif;">2.</div>
<div class="t" style="left:360px;top:403px;font-size:13.3px;line-height:13.3px;color:#000;font-family:'Liberation Sans', sans-serif;">Coordinación con actores locales de la</div>
<div class="t" style="left:360px;top:420px;font-size:13.3px;line-height:13.3px;color:#000;font-family:'Liberation Sans', sans-serif;">comunidad para ingresos a territorio.</div>
<div class="t" style="left:336px;top:438px;font-size:13.3px;line-height:13.3px;color:#000;font-family:'Liberation Sans', sans-serif;">3.</div>
<div class="t" style="left:360px;top:438px;font-size:13.3px;line-height:13.3px;color:#000;font-family:'Liberation Sans', sans-serif;">Seguimiento a solicitud de certificados y</div>
<div class="t" style="left:360px;top:456px;font-size:13.3px;line-height:13.3px;color:#000;font-family:'Liberation Sans', sans-serif;">reportes educativos al director de la</div>
<div class="t" style="left:360px;top:474px;font-size:13.3px;line-height:13.3px;color:#000;font-family:'Liberation Sans', sans-serif;">unidad educativa “Luis Garzón Jiménez”</div>
<div class="t" style="left:336px;top:492px;font-size:13.3px;line-height:13.3px;color:#000;font-family:'Liberation Sans', sans-serif;">4.</div>
<div class="t" style="left:360px;top:492px;font-size:13.3px;line-height:13.3px;color:#000;font-family:'Liberation Sans', sans-serif;">Actualización y organización de</div>
<div class="t" style="left:360px;top:510px;font-size:13.3px;line-height:13.3px;color:#000;font-family:'Liberation Sans', sans-serif;">documentación de los usuarios para</div>
<div class="t" style="left:360px;top:528px;font-size:13.3px;line-height:13.3px;color:#000;font-family:'Liberation Sans', sans-serif;">identificar el estado del documento de</div>
<div class="t" style="left:360px;top:546px;font-size:13.3px;line-height:13.3px;color:#000;font-family:'Liberation Sans', sans-serif;">identidad</div>
<div class="t" style="left:336px;top:564px;font-size:13.3px;line-height:13.3px;color:#000;font-family:'Liberation Sans', sans-serif;">5.</div>
<div class="t" style="left:360px;top:564px;font-size:13.3px;line-height:13.3px;color:#000;font-family:'Liberation Sans', sans-serif;"> Se realiza informe mensual del área de</div>
<div class="t" style="left:360px;top:582px;font-size:13.3px;line-height:13.3px;color:#000;font-family:'Liberation Sans', sans-serif;">trabajo social</div>
<div class="t" style="left:336px;top:600px;font-size:13.3px;line-height:13.3px;color:#000;font-family:'Liberation Sans', sans-serif;">6.</div>
<div class="t" style="left:360px;top:600px;font-size:13.3px;line-height:13.3px;color:#000;font-family:'Liberation Sans', sans-serif;">Se realiza asistencia mensual</div>
<div class="t" style="left:336px;top:618px;font-size:13.3px;line-height:13.3px;color:#000;font-family:'Liberation Sans', sans-serif;">7.</div>
<div class="t" style="left:360px;top:618px;font-size:13.3px;line-height:13.3px;color:#000;font-family:'Liberation Sans', sans-serif;">Recorrido en la calle 6 de marzo, mercado</div>
<div class="t" style="left:360px;top:636px;font-size:13.3px;line-height:13.3px;color:#000;font-family:'Liberation Sans', sans-serif;">José Mascote y 4 manzanas para</div>
<div class="t" style="left:360px;top:654px;font-size:13.3px;line-height:13.3px;color:#000;font-family:'Liberation Sans', sans-serif;">focalización de NNA en situación de</div>
<div class="t" style="left:360px;top:672px;font-size:13.3px;line-height:13.3px;color:#000;font-family:'Liberation Sans', sans-serif;">trabajo infantil.</div>
<div class="t" style="left:654px;top:366px;font-size:13.3px;line-height:13.3px;color:#000;font-family:'Liberation Sans', sans-serif;">1.</div>
<div class="t" style="left:679px;top:366px;font-size:13.3px;line-height:13.3px;color:#000;font-family:'Liberation Sans', sans-serif;word-spacing:1.488px;">Reunión con equipo técnico para coordinar</div>
<div class="t" style="left:679px;top:384px;font-size:13.3px;line-height:13.3px;color:#000;font-family:'Liberation Sans', sans-serif;word-spacing:11.991px;">actividades futuras e ingreso a las</div>
<div class="t" style="left:679px;top:402px;font-size:13.3px;line-height:13.3px;color:#000;font-family:'Liberation Sans', sans-serif;word-spacing:4.450px;">comunidades para ejecutar talleres a las</div>
<div class="t" style="left:679px;top:420px;font-size:13.3px;line-height:13.3px;color:#000;font-family:'Liberation Sans', sans-serif;">familias.</div>
<div class="t" style="left:654px;top:438px;font-size:13.3px;line-height:13.3px;color:#000;font-family:'Liberation Sans', sans-serif;">2.</div>
<div class="t" style="left:679px;top:438px;font-size:13.3px;line-height:13.3px;color:#000;font-family:'Liberation Sans', sans-serif;word-spacing:2.123px;">Se coordina ingreso a los recintos con los</div>
<div class="t" style="left:679px;top:456px;font-size:13.3px;line-height:13.3px;color:#000;font-family:'Liberation Sans', sans-serif;">actores locales de las comunidades.</div>
<div class="t" style="left:654px;top:473px;font-size:13.3px;line-height:13.3px;color:#000;font-family:'Liberation Sans', sans-serif;">3.</div>
<div class="t" style="left:679px;top:473px;font-size:13.3px;line-height:13.3px;color:#000;font-family:'Liberation Sans', sans-serif;word-spacing:1.871px;">Determinar las condiciones académicas de</div>
<div class="t" style="left:679px;top:491px;font-size:13.3px;line-height:13.3px;color:#000;font-family:'Liberation Sans', sans-serif;word-spacing:0.857px;">los usuarios de la comunidad Cerrito de los</div>
<div class="t" style="left:679px;top:509px;font-size:13.3px;line-height:13.3px;color:#000;font-family:'Liberation Sans', sans-serif;word-spacing:1.242px;">Morreños en función de finalización de año</div>
<div class="t" style="left:679px;top:527px;font-size:13.3px;line-height:13.3px;color:#000;font-family:'Liberation Sans', sans-serif;">lectivo.</div>
<div class="t" style="left:654px;top:545px;font-size:13.3px;line-height:13.3px;color:#000;font-family:'Liberation Sans', sans-serif;">4.</div>
<div class="t" style="left:679px;top:545px;font-size:13.3px;line-height:13.3px;color:#000;font-family:'Liberation Sans', sans-serif;word-spacing:-0.453px;">Evidenciar la calidad de las cedulas y de esa</div>
<div class="t" style="left:679px;top:563px;font-size:13.3px;line-height:13.3px;color:#000;font-family:'Liberation Sans', sans-serif;word-spacing:1.684px;">manera contar con información actualizada</div>
<div class="t" style="left:679px;top:581px;font-size:13.3px;line-height:13.3px;color:#000;font-family:'Liberation Sans', sans-serif;">de los usuarios.</div>
<div class="t" style="left:654px;top:599px;font-size:13.3px;line-height:13.3px;color:#000;font-family:'Liberation Sans', sans-serif;">5.</div>
<div class="t" style="left:679px;top:599px;font-size:13.3px;line-height:13.3px;color:#000;font-family:'Liberation Sans', sans-serif;word-spacing:1.279px;">Se realiza el informe de las actividades del</div>
<div class="t" style="left:679px;top:617px;font-size:13.3px;line-height:13.3px;color:#000;font-family:'Liberation Sans', sans-serif;word-spacing:0.330px;">área de trabajo social y cumplimiento de las</div>
<div class="t" style="left:679px;top:635px;font-size:13.3px;line-height:13.3px;color:#000;font-family:'Liberation Sans', sans-serif;">mismas.</div>
<div class="t" style="left:654px;top:653px;font-size:13.3px;line-height:13.3px;color:#000;font-family:'Liberation Sans', sans-serif;">6.</div>
<div class="t" style="left:679px;top:653px;font-size:13.3px;line-height:13.3px;color:#000;font-family:'Liberation Sans', sans-serif;">Se realiza la asistencia del mes.</div>
<div class="t" style="left:654px;top:671px;font-size:13.3px;line-height:13.3px;color:#000;font-family:'Liberation Sans', sans-serif;">7.</div>
<div class="t" style="left:679px;top:671px;font-size:13.3px;line-height:13.3px;color:#000;font-family:'Liberation Sans', sans-serif;word-spacing:-0.658px;">Se ejecuto el recorrido en el sector de la 6 de</div>
<div class="t" style="left:679px;top:689px;font-size:13.3px;line-height:13.3px;color:#000;font-family:'Liberation Sans', sans-serif;word-spacing:-1.336px;">marzo- mercado José Mascote y 4 manzanas</div>
<div class="t" style="left:956px;top:347px;font-size:14.67px;line-height:14.67px;color:#000;font-family:'Liberation Serif', serif;font-weight:700;transform:scaleX(1.0040);">SEMANA 4</div>
<div class="t" style="left:961px;top:364px;font-size:14.67px;line-height:14.67px;color:#000;font-family:'Liberation Serif', serif;font-weight:700;transform:scaleX(1.0045);">DEL 28 al</div>
<div class="t" style="left:956px;top:381px;font-size:14.67px;line-height:14.67px;color:#000;font-family:'Liberation Serif', serif;font-weight:700;transform:scaleX(0.9935);">31de Marzo</div>
<div class="t" style="left:979px;top:397px;font-size:14.67px;line-height:14.67px;color:#000;font-family:'Liberation Serif', serif;font-weight:700;transform:scaleX(0.9893);">2022</div>
<div class="t" style="left:1045px;top:348px;font-size:13.3px;line-height:13.3px;color:#000;font-family:'Liberation Sans', sans-serif;font-weight:700;word-spacing:0.242px;">Soc. María Reinela</div>
<div class="t" style="left:1045px;top:366px;font-size:13.3px;line-height:13.3px;color:#000;font-family:'Liberation Sans', sans-serif;font-weight:700;transform:scaleX(0.9727);">Tepú. Mgs</div>
<div class="t" style="left:1045px;top:384px;font-size:13.3px;line-height:13.3px;color:#2e74b5;font-family:'Liberation Sans', sans-serif;word-spacing:7.625px;">Analista Zonal de</div>
<div class="t" style="left:1045px;top:402px;font-size:13.3px;line-height:13.3px;color:#2e74b5;font-family:'Liberation Sans', sans-serif;word-spacing:1.219px;">Protección Especial</div>
<div class="t" style="left:1045px;top:420px;font-size:13.3px;line-height:13.3px;color:#2e74b5;font-family:'Liberation Sans', sans-serif;word-spacing:2.688px;">Coordinación Zonal</div>
<div class="t" style="left:1045px;top:438px;font-size:13.3px;line-height:13.3px;color:#2e74b5;font-family:'Liberation Sans', sans-serif;transform:scaleX(0.9172);">8 MIES</div>
<div class="t" style="left:14px;top:107px;font-size:12px;line-height:12px;color:#262626;font-family:'Liberation Sans', sans-serif;transform:scaleX(0.9366);">Pegar</div>
<div class="t" style="left:72px;top:73px;font-size:12px;line-height:12px;color:#a6a6a6;font-family:'Liberation Sans', sans-serif;transform:scaleX(0.9897);">Cortar</div>
<div class="t" style="left:72px;top:96px;font-size:12px;line-height:12px;color:#a6a6a6;font-family:'Liberation Sans', sans-serif;transform:scaleX(0.9898);">Copiar</div>
<div class="t" style="left:72px;top:119px;font-size:12px;line-height:12px;color:#262626;font-family:'Liberation Sans', sans-serif;transform:scaleX(1.0079);">Copiar formato</div>
<div class="t" style="left:42px;top:142px;font-size:12px;line-height:12px;color:#303030;font-family:'Liberation Sans', sans-serif;transform:scaleX(0.9333);">Portapapeles</div>
<div class="t" style="left:290px;top:142px;font-size:12px;line-height:12px;color:#303030;font-family:'Liberation Sans', sans-serif;transform:scaleX(0.9368);">Fuente</div>
<div class="t" style="left:562px;top:142px;font-size:12px;line-height:12px;color:#303030;font-family:'Liberation Sans', sans-serif;transform:scaleX(0.9146);">Párrafo</div>
<div class="t" style="left:921px;top:142px;font-size:12px;line-height:12px;color:#303030;font-family:'Liberation Sans', sans-serif;transform:scaleX(0.9054);">Estilos</div>
<div class="t" style="left:1220px;top:142px;font-size:12px;line-height:12px;color:#303030;font-family:'Liberation Sans', sans-serif;transform:scaleX(0.9401);">Edición</div>
<div class="t" style="left:1211px;top:73px;font-size:12px;line-height:12px;color:#262626;font-family:'Liberation Sans', sans-serif;transform:scaleX(0.9101);">Buscar</div>
<div class="t" style="left:1211px;top:96px;font-size:12px;line-height:12px;color:#262626;font-family:'Liberation Sans', sans-serif;transform:scaleX(0.9428);">Reemplazar</div>
<div class="t" style="left:1211px;top:119px;font-size:12px;line-height:12px;color:#262626;font-family:'Liberation Sans', sans-serif;transform:scaleX(0.9569);">Seleccionar</div>
<div class="t" style="left:180px;top:81px;font-size:12px;line-height:12px;color:#262626;font-family:'Liberation Sans', sans-serif;transform:scaleX(0.9681);">Calibri (Cuerpo)</div>
<div class="t" style="left:292px;top:81px;font-size:12px;line-height:12px;color:#262626;font-family:'Liberation Sans', sans-serif;transform:scaleX(0.8822);">11</div>
<div class="t" style="left:733px;top:111px;font-size:12px;line-height:12px;color:#303030;font-family:'Liberation Sans', sans-serif;transform:scaleX(0.9906);">¶ Normal</div>
<div class="t" style="left:800px;top:111px;font-size:12px;line-height:12px;color:#303030;font-family:'Liberation Sans', sans-serif;transform:scaleX(0.8874);">¶ Sin espa...</div>
<div class="t" style="left:882px;top:111px;font-size:12px;line-height:12px;color:#303030;font-family:'Liberation Sans', sans-serif;transform:scaleX(0.9493);">Título 1</div>
<div class="t" style="left:955px;top:111px;font-size:12px;line-height:12px;color:#303030;font-family:'Liberation Sans', sans-serif;transform:scaleX(0.9493);">Título 2</div>
<div class="t" style="left:1031px;top:111px;font-size:12px;line-height:12px;color:#303030;font-family:'Liberation Sans', sans-serif;transform:scaleX(0.9662);">Título</div>
<div class="t" style="left:1094px;top:111px;font-size:12px;line-height:12px;color:#303030;font-family:'Liberation Sans', sans-serif;transform:scaleX(1.0132);">Subtítulo</div>
<div class="a" style="left:722px;top:74px;width:65px;height:32px;overflow:hidden"><div class="t" style="left:7px;top:13px;font-size:12px;line-height:12px;color:#000;font-family:'Liberation Sans', sans-serif;">AaBbCcDd</div></div>
<div class="a" style="left:794px;top:74px;width:65px;height:32px;overflow:hidden"><div class="t" style="left:7px;top:13px;font-size:12px;line-height:12px;color:#000;font-family:'Liberation Sans', sans-serif;">AaBbCcDd</div></div>
<div class="a" style="left:869px;top:75px;width:61.5px;height:31px;overflow:hidden"><div class="t" style="left:4px;top:9px;font-size:17px;line-height:17px;color:#3c84c8;font-family:'Liberation Sans', sans-serif;">AaBbCcDd</div></div>
<div class="a" style="left:940px;top:74px;width:63px;height:32px;overflow:hidden"><div class="t" style="left:5px;top:10px;font-size:15px;line-height:15px;color:#3c84c8;font-family:'Liberation Sans', sans-serif;">AaBbCcDd</div></div>
<div class="a" style="left:1012px;top:79px;width:68px;height:27px;overflow:hidden"><div class="t" style="left:5px;top:-8px;font-size:33.5px;line-height:33.5px;color:#000;font-family:'Liberation Sans', sans-serif;transform:scaleX(0.8685);-webkit-text-stroke:0.6px #fff;">AaB</div></div>
<div class="a" style="left:1084px;top:74px;width:63px;height:32px;overflow:hidden"><div class="t" style="left:5px;top:13px;font-size:12.5px;line-height:12.5px;color:#595959;font-family:'Liberation Sans', sans-serif;letter-spacing:1px;">AaBbCcDd</div></div>
<div class="t" style="left:654px;top:79px;font-size:8.5px;line-height:8.5px;color:#2b79c2;font-family:'Liberation Sans', sans-serif;font-weight:700;">A</div>
<div class="t" style="left:654.5px;top:87px;font-size:8.5px;line-height:8.5px;color:#8a3fc7;font-family:'Liberation Sans', sans-serif;font-weight:700;">Z</div>
<div class="t" style="left:1192px;top:92px;font-size:10.5px;line-height:10.5px;color:#555;font-family:'Liberation Sans', sans-serif;transform:scaleX(0.9412);">a</div>
<div class="t" style="left:1198px;top:92px;font-size:10.5px;line-height:10.5px;color:#8a3fc7;font-family:'Liberation Sans', sans-serif;transform:scaleX(1.0267);">b</div>
<div class="t" style="left:1197px;top:100px;font-size:10.5px;line-height:10.5px;color:#2b79c2;font-family:'Liberation Sans', sans-serif;transform:scaleX(0.9915);">ac</div>
<div class="t" style="left:182px;top:111px;font-size:12px;line-height:12px;color:#444;font-family:'Liberation Sans', sans-serif;font-weight:700;transform:scaleX(1.0378);">N</div>
<div class="t" style="left:206px;top:111px;font-size:12px;line-height:12px;color:#444;font-family:'Liberation Sans', sans-serif;font-weight:700;font-style:italic;transform:scaleX(0.9802);">K</div>
<div class="t" style="left:231px;top:111px;font-size:12px;line-height:12px;color:#444;font-family:'Liberation Sans', sans-serif;font-weight:700;">S</div>
<div class="t" style="left:266px;top:112px;font-size:11px;line-height:11px;color:#555;font-family:'Liberation Sans', sans-serif;transform:scaleX(0.9014);text-decoration:line-through;">abc</div>
<div class="t" style="left:292px;top:110px;font-size:13px;line-height:13px;color:#444;font-family:'Liberation Sans', sans-serif;font-weight:700;transform:scaleX(1.1058);">x</div>
<div class="t" style="left:300.5px;top:117px;font-size:7px;line-height:7px;color:#2b79c2;font-family:'Liberation Sans', sans-serif;font-weight:700;">2</div>
<div class="t" style="left:316px;top:110px;font-size:13px;line-height:13px;color:#444;font-family:'Liberation Sans', sans-serif;font-weight:700;transform:scaleX(1.1058);">x</div>
<div class="t" style="left:324px;top:109px;font-size:7px;line-height:7px;color:#2b79c2;font-family:'Liberation Sans', sans-serif;font-weight:700;">2</div>
<div class="t" style="left:347px;top:110px;font-size:15px;line-height:15px;color:#fff;font-family:'Liberation Sans', sans-serif;font-weight:700;transform:scaleX(1.1066);-webkit-text-stroke:1.2px #2b79c2;">A</div>
<div class="t" style="left:426px;top:110px;font-size:12.5px;line-height:12.5px;color:#444;font-family:'Liberation Sans', sans-serif;transform:scaleX(1.1386);">A</div>
<div class="t" style="left:383px;top:110px;font-size:9.5px;line-height:9.5px;color:#444;font-family:'Liberation Sans', sans-serif;font-weight:700;transform:scaleX(0.9014);">ab</div>
<div class="t" style="left:340px;top:81px;font-size:13px;line-height:13px;color:#444;font-family:'Liberation Sans', sans-serif;transform:scaleX(1.1532);">A</div>
<div class="t" style="left:365px;top:84px;font-size:10px;line-height:10px;color:#444;font-family:'Liberation Sans', sans-serif;transform:scaleX(1.1241);">A</div>
<div class="t" style="left:392px;top:80px;font-size:12.5px;line-height:12.5px;color:#444;font-family:'Liberation Sans', sans-serif;transform:scaleX(0.9806);">Aa</div>
<div class="t" style="left:438.5px;top:81px;font-size:10px;line-height:10px;color:#555;font-family:'Liberation Sans', sans-serif;transform:scaleX(1.0492);">A</div>
<div class="t" style="left:9px;top:711px;font-size:12px;line-height:12px;color:#575757;font-family:'Liberation Sans', sans-serif;transform:scaleX(1.0351);">Inicio</div>
<div class="t" style="left:47px;top:711px;font-size:12px;line-height:12px;color:#383838;font-family:'Liberation Sans', sans-serif;transform:scaleX(0.8689);">1 de 5</div>
<div class="t" style="left:96px;top:711px;font-size:12px;line-height:12px;color:#383838;font-family:'Liberation Sans', sans-serif;transform:scaleX(0.9312);">1168 palabras</div>
<div class="t" style="left:217px;top:711px;font-size:12px;line-height:12px;color:#383838;font-family:'Liberation Sans', sans-serif;transform:scaleX(0.9206);">Español (Ecuador)</div>
<div class="t" style="left:348px;top:711px;font-size:12px;line-height:12px;color:#383838;font-family:'Liberation Sans', sans-serif;transform:scaleX(0.9427);">Accesibilidad: es necesario investigar</div>
<div class="t" style="left:1331px;top:711px;font-size:12px;line-height:12px;color:#383838;font-family:'Liberation Sans', sans-serif;transform:scaleX(0.8794);">100%</div>
<div class="t" style="left:88px;top:741px;font-size:15px;line-height:15px;color:#2b2b2b;font-family:'Liberation Sans', sans-serif;transform:scaleX(0.9624);">Escribe aquí para buscar</div>
<div class="t" style="left:1004px;top:742px;font-size:14px;line-height:14px;color:#ffffff;font-family:'Liberation Sans', sans-serif;transform:scaleX(0.9271);">29°C</div>
<div class="t" style="left:1221px;top:742px;font-size:11.5px;line-height:11.5px;color:#ffffff;font-family:'Liberation Sans', sans-serif;transform:scaleX(0.8038);">ESP</div>
<div class="t" style="left:1268px;top:733px;font-size:12px;line-height:12px;color:#ffffff;font-family:'Liberation Sans', sans-serif;transform:scaleX(0.8658);">19:44</div>
<div class="t" style="left:1258px;top:751px;font-size:12px;line-height:12px;color:#ffffff;font-family:'Liberation Sans', sans-serif;transform:scaleX(0.9846);">8/4/2022</div>
<div class="t" style="left:798.5px;top:744px;font-size:9.5px;line-height:9.5px;color:#fff;font-family:'Liberation Sans', sans-serif;font-weight:700;transform:scaleX(1.1150);">W</div>
<div class="t" style="left:848.5px;top:744px;font-size:9.5px;line-height:9.5px;color:#fff;font-family:'Liberation Sans', sans-serif;font-weight:700;transform:scaleX(1.2611);">X</div>
<div class="t" style="left:898px;top:744px;font-size:9.5px;line-height:9.5px;color:#fff;font-family:'Liberation Sans', sans-serif;font-weight:700;transform:scaleX(1.1823);">P</div>
<div class="t" style="left:1337.5px;top:751px;font-size:11px;line-height:11px;color:#fff;font-family:'Liberation Sans', sans-serif;font-weight:700;transform:scaleX(0.9796);">1</div>
</body></html>
